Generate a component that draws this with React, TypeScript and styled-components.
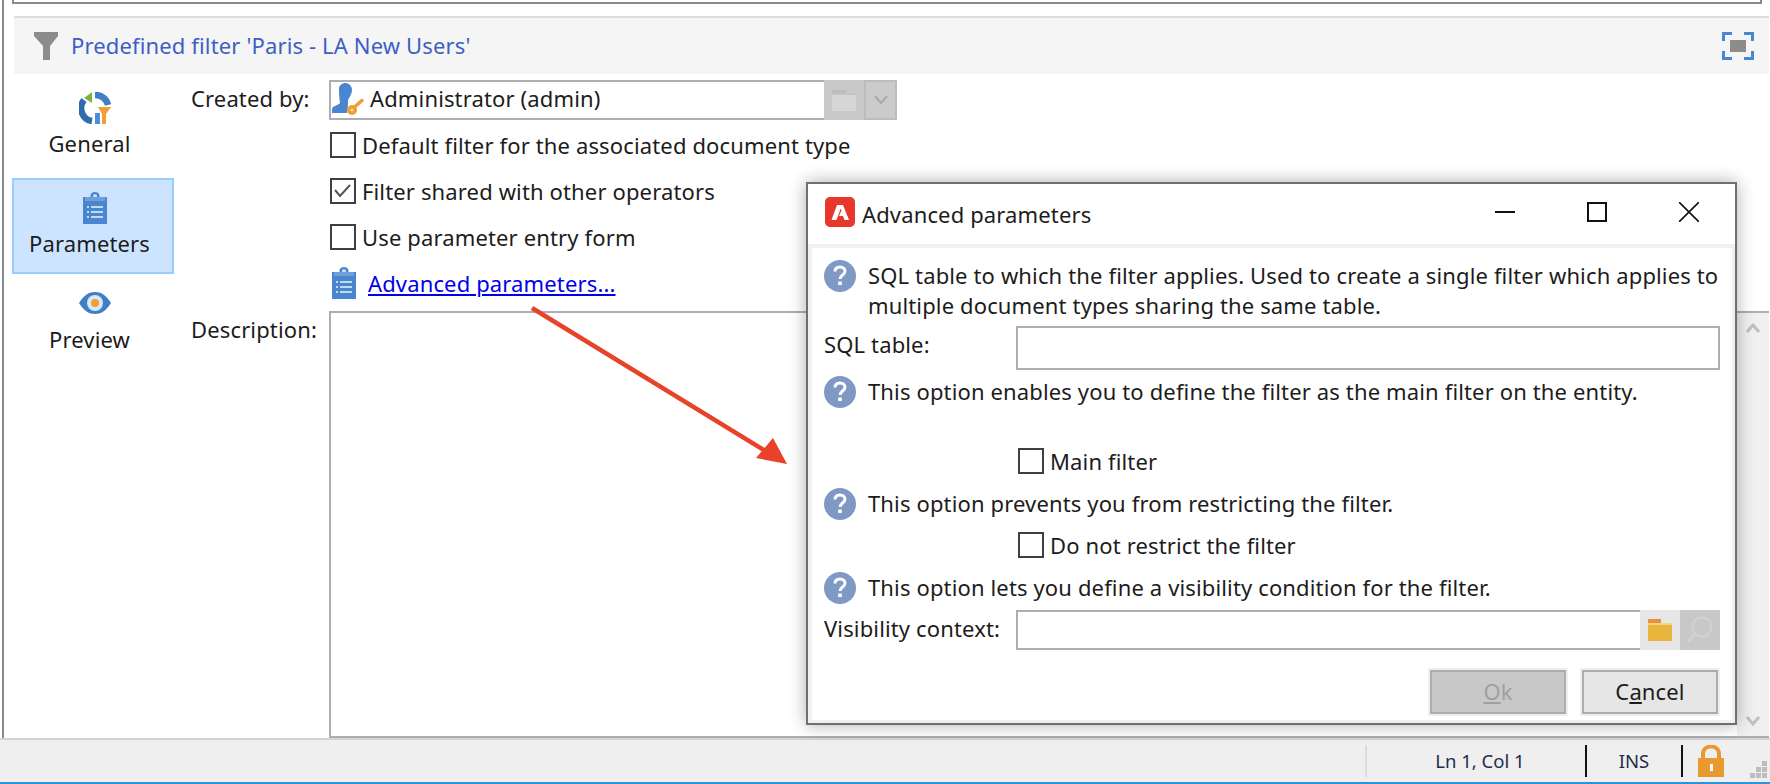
import React from "react";
import styled, { createGlobalStyle } from "styled-components";

const Global = createGlobalStyle`
  html, body { margin: 0; padding: 0; width: 1770px; height: 784px; overflow: hidden; background: #fff; }
  * { box-sizing: border-box; }
  #root { width: 1770px; height: 784px; }
`;

const Page = styled.div`
  position: relative;
  width: 1770px;
  height: 784px;
  display: flex;
  flex-direction: column;
  font-family: "Noto Sans", "Open Sans", sans-serif;
  font-size: 22px;
  letter-spacing: 0.14px;
  color: #1c1c1c;
  background: #fff;
`;
const Main = styled.div`
  margin-left: 2px;
  height: 738px;
  border-left: 2px solid #868a91;
  display: flex;
  flex-direction: column;
`;
const TopStub = styled.div`
  height: 16px;
  padding: 0 8px 0 8px;
`;
const TopField = styled.div`
  height: 4px;
  border: 2px solid #868a91;
  border-top: 0;
  border-width: 0 2px 2px 2px;
`;
const Header = styled.div`
  margin: 0 1px 0 10px;
  height: 58px;
  border-top: 2px solid #dedede;
  background: #f5f5f5;
  display: flex;
  align-items: center;
  padding: 0 15px 0 20px;
`;
const HeaderTitle = styled.div`
  flex: 1;
  margin: 0 0 2px 13px;
  color: #3d5fc4;
  white-space: nowrap;
`;
const Body = styled.div`
  flex: 1;
  display: flex;
  min-height: 0;
`;
const Sidebar = styled.div`
  width: 170px;
  padding: 4px 0 0 8px;
  display: flex;
  flex-direction: column;
`;
const NavItem = styled.div<{ $active?: boolean; $h: number }>`
  width: 162px;
  height: ${(p) => p.$h}px;
  padding-top: 12px;
  display: flex;
  flex-direction: column;
  align-items: center;
  border: 2px solid ${(p) => (p.$active ? "#99ccff" : "transparent")};
  background: ${(p) => (p.$active ? "#cce4ff" : "transparent")};
`;
const NavIcon = styled.div`
  height: 32px;
  margin-left: 4px;
  display: flex;
  align-items: center;
`;
const NavLabel = styled.div`
  margin-top: 4px;
  padding-right: 7px;
  line-height: 30px;
`;
const Form = styled.div`
  flex: 1;
  min-width: 0;
  padding: 6px 1px 0 17px;
  display: grid;
  grid-template-columns: 138px 1fr;
  grid-template-rows: 42px 46px 46px 46px 46px 5px 1fr;
`;
const FieldLabel = styled.div`
  line-height: 36px;
  white-space: nowrap;
`;
const Combo = styled.div`
  width: 568px;
  height: 40px;
  display: flex;
  align-items: stretch;
`;
const ComboValue = styled.div`
  flex: 1;
  border: 2px solid #adadb3;
  border-right: 0;
  display: flex;
  align-items: center;
  gap: 4px;
  padding-left: 1px;
  white-space: nowrap;
`;
const ComboText = styled.span`
  margin-bottom: 4px;
`;
const ComboPicker = styled.div`
  width: 40px;
  background: #c9c9c9;
  display: flex;
  align-items: center;
  justify-content: center;
`;
const ComboDrop = styled.div`
  width: 33px;
  border: 2px solid #bcbcbc;
  background: #cbcbcb;
  display: flex;
  align-items: center;
  justify-content: center;
`;
const CheckRow = styled.label<{ $mt?: number; $ml?: number }>`
  display: flex;
  align-items: center;
  gap: 6px;
  height: 26px;
  margin-top: ${(p) => p.$mt ?? 0}px;
  margin-left: ${(p) => p.$ml ?? 0}px;
  white-space: nowrap;
`;
const FormCheckCell = styled.div`
  grid-column: 2;
  display: flex;
  align-items: center;
  padding-left: 1px;
`;
const CheckBox = styled.span`
  width: 26px;
  height: 26px;
  flex: none;
  border: 2px solid #3f3f3f;
  background: #fff;
  display: flex;
  align-items: center;
  justify-content: center;
`;
const LinkCell = styled.div`
  grid-column: 2;
  display: flex;
  align-items: center;
  gap: 12px;
  padding-left: 3px;
`;
const Link = styled.a`
  color: #0000ee;
  text-decoration: underline;
  white-space: nowrap;
`;
const DescLabel = styled.div`
  grid-row: 7;
  line-height: 36px;
  white-space: nowrap;
`;
const DescBox = styled.div`
  grid-row: 7;
  grid-column: 2;
  border: 2px solid #adadb3;
  border-right-width: 0;
  display: flex;
  justify-content: flex-end;
`;
const ScrollTrack = styled.div`
  width: 32px;
  background: #f0f0f0;
  display: flex;
  flex-direction: column;
  justify-content: space-between;
  align-items: center;
  padding: 10px 0 10px;
`;
const Status = styled.div`
  height: 46px;
  border-top: 2px solid #d3d3d3;
  border-bottom: 2px solid #3192dc;
  background: #efefef;
  display: flex;
  align-items: center;
  padding-left: 1365px;
  font-size: 18.500px;
  letter-spacing: 0;
  color: #1f2c50;
`;
const StatusSep = styled.div<{ $light?: boolean }>`
  width: 2px;
  height: 32px;
  background: ${(p) => (p.$light ? "#dcdcdc" : "#111")};
`;
const StatusCell = styled.div<{ $w: number; $pl?: number }>`
  width: ${(p) => p.$w}px;
  padding: 0 0 2px ${(p) => p.$pl ?? 0}px;
  text-align: center;
  white-space: nowrap;
`;
const LockWrap = styled.div`
  margin-left: 15px;
  display: flex;
`;
const GripWrap = styled.div`
  margin: 18px 0 0 26px;
  display: flex;
`;

const Dialog = styled.div`
  position: absolute;
  left: 806px;
  top: 182px;
  width: 931px;
  height: 543px;
  border: 2px solid #6f6f6f;
  background: #fff;
  box-shadow: 0 0 16px rgba(0, 0, 0, 0.32);
  display: flex;
  flex-direction: column;
`;
const DialogBar = styled.div`
  height: 60px;
  padding: 0 0 4px 17px;
  display: flex;
  align-items: center;
`;
const DialogTitle = styled.div`
  flex: 1;
  margin: 3px 0 0 7px;
  white-space: nowrap;
`;
const WinButtons = styled.div`
  display: flex;
  align-items: center;
  gap: 72px;
  padding-right: 36px;
`;
const DialogBody = styled.div`
  flex: 1;
  border-style: solid;
  border-color: #f0f0f0;
  border-width: 4px 3px 3px 4px;
  padding: 12px 12px 0;
  display: flex;
  flex-direction: column;
`;
const InfoRow = styled.div<{ $mt?: number; $h: number }>`
  display: flex;
  gap: 12px;
  height: ${(p) => p.$h}px;
  margin-top: ${(p) => p.$mt ?? 0}px;
`;
const InfoText = styled.div`
  line-height: 30px;
  white-space: nowrap;
`;
const FieldRow = styled.div<{ $mt: number }>`
  display: grid;
  grid-template-columns: 192px 1fr;
  align-items: start;
  margin-top: ${(p) => p.$mt}px;
`;
const DialogLabel = styled.div`
  line-height: 36px;
  white-space: nowrap;
`;
const TextInput = styled.div<{ $h: number }>`
  height: ${(p) => p.$h}px;
  border: 2px solid #adadb3;
  background: #fff;
`;
const PickerGroup = styled.div`
  display: flex;
`;
const PickerInput = styled(TextInput)`
  flex: 1;
  border-right: 0;
`;
const PickerButton = styled.div<{ $dark?: boolean }>`
  width: 40px;
  height: 40px;
  background: ${(p) => (p.$dark ? "#c8c8c8" : "#e6e6e6")};
  display: flex;
  align-items: center;
  justify-content: center;
`;
const DialogActions = styled.div`
  margin-top: 18px;
  display: flex;
  justify-content: flex-end;
  gap: 12px;
`;
const ActionButton = styled.div<{ $disabled?: boolean }>`
  width: 140px;
  height: 48px;
  padding-bottom: 2px;
  border: 2px solid #eeeeee;
  box-shadow: inset 0 0 0 2px #adadad;
  background: ${(p) => (p.$disabled ? "#c8c8c8" : "#e6e6e6")};
  color: ${(p) => (p.$disabled ? "#a0a0a0" : "#1c1c1c")};
  display: flex;
  align-items: center;
  justify-content: center;
`;
const Arrow = styled.svg`
  position: absolute;
  left: 520px;
  top: 300px;
  pointer-events: none;
`;

const Funnel = () => (
  <svg width="24" height="28" viewBox="0 0 24 28"><path d="M0 0h24v4l-8 10v14h-7V14L0 4z" fill="#8c8c8c" /></svg>
);
const Expand = () => (
  <svg width="32" height="28" viewBox="0 0 32 28" fill="none" stroke="#4a86cf" strokeWidth="3">
    <path d="M1.500 9V1.500H10M22 1.500h8.500V9M30.500 19v7.500H22M10 26.500H1.500V19" />
    <rect x="8" y="8" width="16" height="12" fill="#8c8c8c" stroke="none" />
  </svg>
);
const Clipboard = () => (
  <svg width="24" height="32" viewBox="0 0 24 32">
    <path d="M0 5h7.500V3.500C7.500 1.500 9.500 0 12 0s4.500 1.500 4.500 3.500V5H24v27H0z" fill="#4a86cf" />
    <path d="M2 5h20v4H2z" fill="#7fa9dc" opacity="0.7" />
    <path d="M10 4c0-2.500 4-2.500 4 0v1h-4z" fill="#cfe0f5" />
    <path d="M4 14h2v2H4zM8 14h12v2H8zM4 19h2v2H4zM8 19h12v2H8zM4 24h2v2H4zM8 24h12v2H8z" fill="#c4d8f0" />
  </svg>
);
const GeneralIcon = () => (
  <svg width="32" height="32" viewBox="0 0 32 32" fill="none">
    <path d="M5 8A13 13 0 0 0 13 29" stroke="#2f6bb0" strokeWidth="6.500" />
    <path d="M16 3A13 13 0 0 1 29 13" stroke="#3f7fc4" strokeWidth="6.500" />
    <path d="M16 21h5v11h-5z" fill="#4a90d9" />
    <path d="M5 6l8-6v11z" fill="#7cb342" />
    <path d="M19 15h13l-5 7v10h-4V22z" fill="#ef9f35" />
  </svg>
);
const Eye = () => (
  <svg width="32" height="22" viewBox="0 0 32 22" style={{ marginBottom: 2 }}>
    <path d="M0 11C5 3 10 0 16 0s11 3 16 11c-5 8-10 11-16 11S5 19 0 11z" fill="#3f7fc4" />
    <circle cx="16" cy="11" r="8" fill="#d9e8f7" />
    <circle cx="16" cy="11" r="4" fill="#ef9f35" />
  </svg>
);
const UserKey = () => (
  <svg width="34" height="34" viewBox="0 0 34 34" style={{ flex: "none" }}>
    <path d="M7 6C7 2.500 10 0 13.500 0S20 3 20 7c0 4-3 8-4 10v5l-1 8H0v-4c0-3 7-4 8-6 0-2-1-5-1-14z" fill="#4a86cf" />
    <path d="M31 16.500l-9 8" stroke="#ef9f35" strokeWidth="3.500" />
    <circle cx="20" cy="27" r="5" fill="#ef9f35" />
    <circle cx="20" cy="27" r="1.500" fill="#f9d9a8" />
  </svg>
);
const Check = () => (
  <svg width="18" height="16" viewBox="0 0 18 16" fill="none"><path d="M1 7l5 6L16 2" stroke="#555" strokeWidth="2" /></svg>
);
const Adobe = () => (
  <svg width="30" height="30" viewBox="0 0 30 30">
    <rect width="30" height="30" rx="5" fill="#e8382c" />
    <path d="M12 8h6l6 15h-4.500l-1.500-4h-4l2.500-5.500-.8-2L11.500 23H6.500z" fill="#fff" />
  </svg>
);
const Help = () => (
  <svg width="32" height="32" viewBox="0 0 32 32" style={{ flex: "none" }}>
    <circle cx="16" cy="16" r="16" fill="#7f98c4" />
    <path d="M11 11.500C11 8.500 13 7 16 7s5 1.700 5 4.300c0 3.700-5 3.700-5 7.700" fill="none" stroke="#fff" strokeWidth="3" />
    <rect x="14.200" y="21.500" width="3.600" height="3.600" fill="#fff" />
  </svg>
);
const Chevron = ({ up, color = "#c0c0c0", w = 3 }: { up?: boolean; color?: string; w?: number }) => (
  <svg width="14" height="10" viewBox="0 0 14 10" fill="none">
    <path d={up ? "M1 9l6-7 6 7" : "M1 1l6 7 6-7"} stroke={color} strokeWidth={w} />
  </svg>
);
const Lock = () => (
  <svg width="26" height="32" viewBox="0 0 26 32">
    <path d="M5 14V9c0-10 16-10 16 0v5" fill="none" stroke="#e89a30" strokeWidth="4" />
    <rect y="13" width="26" height="19" fill="#e89a30" />
    <rect x="12" y="19" width="3" height="7" fill="#fff" />
  </svg>
);
const Grip = () => (
  <svg width="18" height="18" viewBox="0 0 18 18" fill="#bdbdbd">
    <path d="M12 0h5v5h-5zM6 6h5v5H6zM12 6h5v5h-5zM0 12h5v5H0zM6 12h5v5H6zM12 12h5v5h-5z" />
  </svg>
);
const Folder = () => (
  <svg width="24" height="22" viewBox="0 0 24 22">
    <path d="M0 4h24v18H0z" fill="#e8b53d" />
    <path d="M0 0h13v4H0z" fill="#e8923a" />
    <path d="M0 4h24v2H0z" fill="#f3d68a" />
  </svg>
);
const DisabledFolder = () => (
  <svg width="24" height="22" viewBox="0 0 24 22">
    <path d="M0 4h24v18H0z" fill="#d6d6d6" />
    <path d="M0 1h13v3H0z" fill="#bdbdbd" />
    <path d="M13 0h1v4h-1z" fill="#bdbdbd" />
    <path d="M0 4h24v2H0z" fill="#c4c4c4" />
  </svg>
);
const Search = () => (
  <svg width="26" height="28" viewBox="0 0 26 28" fill="none" stroke="#d2d2d2" strokeWidth="2">
    <circle cx="15" cy="11" r="9.500" />
    <path d="M8 18l-7 8" strokeWidth="3" />
  </svg>
);

export default function App() {
  return (
    <Page>
      <Global />
      <Main>
        <TopStub>
          <TopField />
        </TopStub>
        <Header>
          <Funnel />
          <HeaderTitle>Predefined filter 'Paris - LA New Users'</HeaderTitle>
          <Expand />
        </Header>
        <Body>
          <Sidebar>
            <NavItem $h={100}>
              <NavIcon><GeneralIcon /></NavIcon>
              <NavLabel>General</NavLabel>
            </NavItem>
            <NavItem $h={96} $active>
              <NavIcon><Clipboard /></NavIcon>
              <NavLabel>Parameters</NavLabel>
            </NavItem>
            <NavItem $h={96}>
              <NavIcon><Eye /></NavIcon>
              <NavLabel>Preview</NavLabel>
            </NavItem>
          </Sidebar>
          <Form>
            <FieldLabel>Created by:</FieldLabel>
            <Combo>
              <ComboValue><UserKey /><ComboText>Administrator (admin)</ComboText></ComboValue>
              <ComboPicker><DisabledFolder /></ComboPicker>
              <ComboDrop><Chevron color="#a8a8a8" w={2} /></ComboDrop>
            </Combo>
            <FormCheckCell><CheckRow><CheckBox />Default filter for the associated document type</CheckRow></FormCheckCell>
            <FormCheckCell><CheckRow><CheckBox><Check /></CheckBox>Filter shared with other operators</CheckRow></FormCheckCell>
            <FormCheckCell><CheckRow><CheckBox />Use parameter entry form</CheckRow></FormCheckCell>
            <LinkCell><Clipboard /><Link>Advanced parameters...</Link></LinkCell>
            <DescLabel>Description:</DescLabel>
            <DescBox>
              <ScrollTrack><Chevron up /><Chevron /></ScrollTrack>
            </DescBox>
          </Form>
        </Body>
      </Main>
      <Status>
        <StatusSep $light />
        <StatusCell $w={218} $pl={8}>Ln 1, Col 1</StatusCell>
        <StatusSep />
        <StatusCell $w={94}>INS</StatusCell>
        <StatusSep />
        <LockWrap><Lock /></LockWrap>
        <GripWrap><Grip /></GripWrap>
      </Status>

      <Arrow width="280" height="175" viewBox="520 300 280 175">
        <path d="M532 308L772 455" stroke="#e8432a" strokeWidth="4.500" />
        <path d="M787 464L756 458L773 438z" fill="#e8432a" />
      </Arrow>

      <Dialog>
        <DialogBar>
          <Adobe />
          <DialogTitle>Advanced parameters</DialogTitle>
          <WinButtons>
            <svg width="20" height="20" viewBox="0 0 20 20"><path d="M0 10h20" stroke="#111" strokeWidth="2" /></svg>
            <svg width="20" height="20" viewBox="0 0 20 20"><rect x="1" y="1" width="18" height="18" fill="none" stroke="#111" strokeWidth="2" /></svg>
            <svg width="20" height="20" viewBox="0 0 20 20"><path d="M0 0l20 20M20 0L0 20" stroke="#111" strokeWidth="1.600" /></svg>
          </WinButtons>
        </DialogBar>
        <DialogBody>
          <InfoRow $h={62}>
            <Help />
            <InfoText>SQL table to which the filter applies. Used to create a single filter which applies to<br />multiple document types sharing the same table.</InfoText>
          </InfoRow>
          <FieldRow $mt={4}>
            <DialogLabel>SQL table:</DialogLabel>
            <TextInput $h={44} />
          </FieldRow>
          <InfoRow $mt={6} $h={32}>
            <Help />
            <InfoText>This option enables you to define the filter as the main filter on the entity.</InfoText>
          </InfoRow>
          <CheckRow $mt={40} $ml={194}><CheckBox />Main filter</CheckRow>
          <InfoRow $mt={14} $h={32}>
            <Help />
            <InfoText>This option prevents you from restricting the filter.</InfoText>
          </InfoRow>
          <CheckRow $mt={12} $ml={194}><CheckBox />Do not restrict the filter</CheckRow>
          <InfoRow $mt={14} $h={32}>
            <Help />
            <InfoText>This option lets you define a visibility condition for the filter.</InfoText>
          </InfoRow>
          <FieldRow $mt={6}>
            <DialogLabel>Visibility context:</DialogLabel>
            <PickerGroup>
              <PickerInput $h={40} />
              <PickerButton><Folder /></PickerButton>
              <PickerButton $dark><Search /></PickerButton>
            </PickerGroup>
          </FieldRow>
          <DialogActions>
            <ActionButton $disabled><span><u>O</u>k</span></ActionButton>
            <ActionButton><span>C<u>a</u>ncel</span></ActionButton>
          </DialogActions>
        </DialogBody>
      </Dialog>
    </Page>
  );
}
